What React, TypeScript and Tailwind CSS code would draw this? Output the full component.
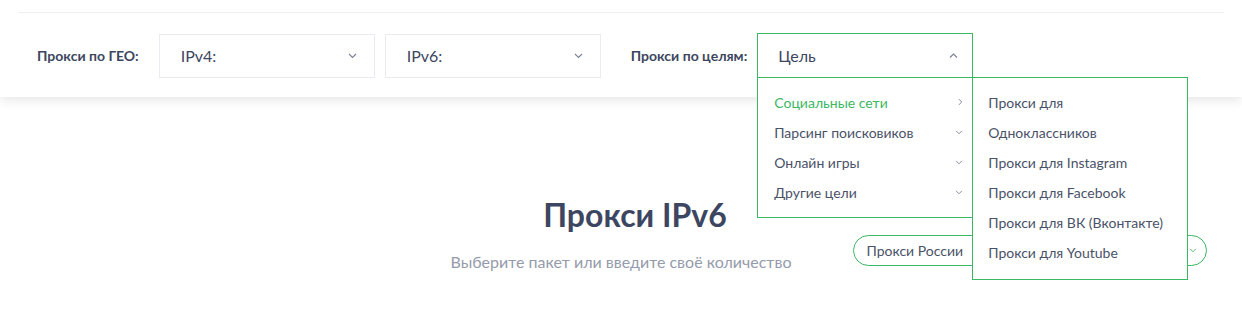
import React from 'react';

const green = 'border-[#3cb763]';

const Chevron: React.FC<{ dir?: 'down' | 'up' | 'right'; className?: string }> = ({ dir = 'down', className = '' }) => {
  const points =
    dir === 'down' ? '1,1 4.5,4.5 8,1' : dir === 'up' ? '1,4.5 4.5,1 8,4.5' : '1,1 4.5,4.5 1,8';
  const box = dir === 'right' ? '0 0 6 9' : '0 0 9 6';
  return (
    <svg viewBox={box} className={className} fill="none" stroke="currentColor" strokeWidth="1.1">
      <polyline points={points} />
    </svg>
  );
};

const goals = [
  { label: 'Социальные сети', active: true },
  { label: 'Парсинг поисковиков' },
  { label: 'Онлайн игры' },
  { label: 'Другие цели' },
];

const social = [
  'Прокси для',
  'Одноклассников',
  'Прокси для Instagram',
  'Прокси для Facebook',
  'Прокси для ВК (Вконтакте)',
  'Прокси для Youtube',
];

const Select: React.FC<{ label: string }> = ({ label }) => (
  <div className="w-[216px] h-[44px] border border-[#ececf0] flex items-center justify-between pl-[21px] pr-[17px] text-[16px] text-[#3d4660]">
    <span>{label}</span>
    <Chevron className="w-[9px] h-[6px] text-[#7a8196]" />
  </div>
);

export default function App() {
  return (
    <div className="w-[1242px] h-[314px] bg-white overflow-hidden text-[#3d4660]" style={{ fontFamily: 'Lato, "Noto Sans", sans-serif' }}>
      {/* filter bar */}
      <div className="relative z-10 bg-white h-[97px] shadow-[0_4px_10px_rgba(0,0,0,0.09)]">
        <div className="pt-[12px] mx-[18px]">
          <div className="border-t border-[#f0f0f2]" />
        </div>
        <div className="flex items-center pl-[37px] pt-[20px]">
          <span className="text-[14px] font-bold mr-[20px]">Прокси по ГЕО:</span>
          <Select label="IPv4:" />
          <div className="w-[10px]" />
          <Select label="IPv6:" />
          <span className="text-[14px] font-bold ml-[30px] mr-[10px]">Прокси по целям:</span>
          <div className="relative">
            <div className={`w-[216px] h-[45px] border ${green} flex items-center justify-between pl-[20px] pr-[14px] text-[16px]`}>
              <span>Цель</span>
              <Chevron dir="up" className="w-[9px] h-[6px] text-[#7a8196]" />
            </div>
            {/* goals dropdown */}
            <div className={`absolute left-0 top-[44px] w-[216px] h-[141px] bg-white border ${green} pt-[9px] pl-[16px] pr-[9px]`}>
              {goals.map((g) => (
                <div key={g.label} className="h-[30px] flex items-center justify-between text-[14px]">
                  <span className={g.active ? 'text-[#3cb763]' : 'text-[#4a5268]'}>{g.label}</span>
                  {g.active ? (
                    <Chevron dir="right" className="w-[5px] h-[8px] text-[#7a8196]" />
                  ) : (
                    <Chevron className="w-[8px] h-[5px] text-[#7a8196]" />
                  )}
                </div>
              ))}
            </div>
            {/* social submenu */}
            <div className={`absolute left-[215px] top-[44px] w-[216px] h-[203px] bg-white border ${green} pt-[9px] pl-[15px]`}>
              {social.map((s) => (
                <div key={s} className="h-[30px] flex items-center text-[14px] text-[#4a5268]">
                  {s}
                </div>
              ))}
            </div>
          </div>
        </div>
      </div>

      {/* heading */}
      <div className="pt-[98px] flex justify-center pl-[28px]">
        <h1 className="text-[32px] font-bold leading-[40px] text-[#3d4660]">Прокси IPv6</h1>
      </div>
      <div className="grid grid-cols-[1fr_auto_1fr]">
        <div />
        <p className="text-[16px] text-[#959bab] pt-[15px]">Выберите пакет или введите своё количество</p>
        <div className="pl-[62px]">
          <div className={`w-[354px] h-[31px] rounded-full border ${green} flex items-center justify-between pl-[12px] pr-[9px] text-[14px] text-[#4a5268]`}>
            <span>Прокси России</span>
            <Chevron className="w-[8px] h-[5px] text-[#3cb763]" />
          </div>
        </div>
      </div>
    </div>
  );
}
